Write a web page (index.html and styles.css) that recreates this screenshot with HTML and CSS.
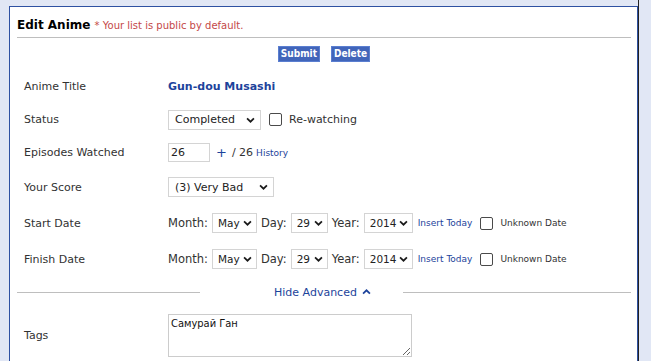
FILE: index.html
```html
<!DOCTYPE html>
<html lang="en">
<head>
    <meta charset="UTF-8">
    <meta name="viewport" content="width=device-width, initial-scale=1.0">
    <title>Edit Anime</title>
    <link rel="stylesheet" href="styles.css">
</head>
<body>
<div class="page">
    <div class="edit-box">
        <h2 class="edit-header">Edit Anime <span class="notice">* Your list is public by default.</span></h2>

        <div class="button-container">
            <button type="submit" class="btn">Submit</button>
            <button type="button" class="btn">Delete</button>
        </div>

        <div class="form-row row-title">
            <div class="label">Anime Title</div>
            <div class="value"><strong class="anime-title">Gun-dou Musashi</strong></div>
        </div>

        <div class="form-row">
            <div class="label">Status</div>
            <div class="value">
                <span class="select-wrap w-status">
                    <select><option>Completed</option></select>
                    <svg class="chev" viewBox="0 0 10 7"><path d="M1 1.5 L5 5.5 L9 1.5"/></svg>
                </span>
                <input type="checkbox" class="check" id="rewatch">
                <label for="rewatch" class="check-label">Re-watching</label>
            </div>
        </div>

        <div class="form-row">
            <div class="label">Episodes Watched</div>
            <div class="value">
                <input type="text" class="episodes" value="26">
                <a href="#" class="plus">+</a>
                <span class="total">/ 26</span>
                <a href="#" class="small-link">History</a>
            </div>
        </div>

        <div class="form-row row-wide">
            <div class="label">Your Score</div>
            <div class="value">
                <span class="select-wrap w-score">
                    <select><option>(3) Very Bad</option></select>
                    <svg class="chev" viewBox="0 0 10 7"><path d="M1 1.5 L5 5.5 L9 1.5"/></svg>
                </span>
            </div>
        </div>

        <div class="form-row row-wide">
            <div class="label">Start Date</div>
            <div class="value date">
                <span>Month:</span>
                <span class="select-wrap w-month">
                    <select><option>May</option></select>
                    <svg class="chev" viewBox="0 0 10 7"><path d="M1 1.5 L5 5.5 L9 1.5"/></svg>
                </span>
                <span>Day:</span>
                <span class="select-wrap w-day">
                    <select><option>29</option></select>
                    <svg class="chev" viewBox="0 0 10 7"><path d="M1 1.5 L5 5.5 L9 1.5"/></svg>
                </span>
                <span>Year:</span>
                <span class="select-wrap w-year">
                    <select><option>2014</option></select>
                    <svg class="chev" viewBox="0 0 10 7"><path d="M1 1.5 L5 5.5 L9 1.5"/></svg>
                </span>
                <a href="#" class="small-link">Insert Today</a>
                <input type="checkbox" class="check">
                <span class="small-text">Unknown Date</span>
            </div>
        </div>

        <div class="form-row row-wide">
            <div class="label">Finish Date</div>
            <div class="value date">
                <span>Month:</span>
                <span class="select-wrap w-month">
                    <select><option>May</option></select>
                    <svg class="chev" viewBox="0 0 10 7"><path d="M1 1.5 L5 5.5 L9 1.5"/></svg>
                </span>
                <span>Day:</span>
                <span class="select-wrap w-day">
                    <select><option>29</option></select>
                    <svg class="chev" viewBox="0 0 10 7"><path d="M1 1.5 L5 5.5 L9 1.5"/></svg>
                </span>
                <span>Year:</span>
                <span class="select-wrap w-year">
                    <select><option>2014</option></select>
                    <svg class="chev" viewBox="0 0 10 7"><path d="M1 1.5 L5 5.5 L9 1.5"/></svg>
                </span>
                <a href="#" class="small-link">Insert Today</a>
                <input type="checkbox" class="check">
                <span class="small-text">Unknown Date</span>
            </div>
        </div>

        <!-- Advanced toggle -->
        <div class="advanced">
            <span class="adv-line left"></span>
            <a href="#" class="adv-link">Hide Advanced
                <svg class="chev-up" viewBox="0 0 10 7"><path d="M1 5.5 L5 1.5 L9 5.5"/></svg>
            </a>
            <span class="adv-line"></span>
        </div>

        <div class="form-row row-tags">
            <div class="label">Tags</div>
            <div class="value">
                <textarea class="tags">Самурай Ган</textarea>
            </div>
        </div>
    </div>
</div>
</body>
</html>
```

FILE: styles.css
```css
body {
    margin: 0;
    background-color: #e1e7f5;
    font-family: Verdana, "DejaVu Sans", sans-serif;
    font-size: 11px;
    color: #323232;
    overflow: hidden;
}

.page {
    width: 639px;
    height: 361px;
    padding: 6px 0 0 9px;
    border-right: 1px solid #222;
    box-sizing: border-box;
}

.edit-box {
    background: #fff;
    border: 1px solid #2e51a2;
    border-bottom: none;
    height: 400px;
    padding: 0 6px 0 7px;
}

.edit-header {
    margin: 0;
    padding: 10px 0 3px;
    font-size: 12px;
    font-weight: bold;
    color: #000;
    border-bottom: 1px solid #bebebe;
    line-height: 16px;
}

.notice {
    font-size: 10px;
    font-weight: normal;
    color: #c44848;
}

.button-container {
    display: flex;
    justify-content: center;
    gap: 11px;
    margin-top: 8px;
}

.btn {
    background-color: #4165ba;
    color: #fff;
    border: 1px solid #5a7ed0;
    font-family: Tahoma, "DejaVu Sans Condensed", sans-serif;
    font-size: 10px;
    font-weight: bold;
    padding: 0 2px;
    height: 16px;
    line-height: 14px;
    border-radius: 0;
    cursor: pointer;
}

.form-row {
    display: flex;
    align-items: center;
    min-height: 33px;
    padding-left: 7px;
}

.row-title {
    margin-top: 8px;
}

.row-wide {
    min-height: 36px;
}

.label {
    width: 144px;
    flex-shrink: 0;
}

.value {
    display: flex;
    align-items: center;
}

.anime-title {
    color: #1d439b;
    font-size: 11px;
}

.select-wrap {
    position: relative;
    display: inline-block;
}

.select-wrap select {
    appearance: none;
    -webkit-appearance: none;
    display: block;
    width: 100%;
    height: 20px;
    border: 1px solid #d4d4d4;
    border-radius: 0;
    background: #fff;
    font-family: inherit;
    font-size: 11px;
    color: #222;
    padding: 0 0 0 6px;
    outline: none;
}

.date .select-wrap select {
    font-size: 10.5px;
    padding-left: 5px;
}

.chev {
    position: absolute;
    right: 6px;
    top: 7px;
    width: 9px;
    height: 6px;
    pointer-events: none;
}

.date .chev {
    right: 5px;
}

.chev path,
.chev-up path {
    fill: none;
    stroke: #1a1a1a;
    stroke-width: 2;
}

.w-status { width: 93px; }
.w-score { width: 106px; }
.w-month { width: 45px; }
.w-day { width: 37px; }
.w-year { width: 49px; }

.check {
    appearance: none;
    -webkit-appearance: none;
    width: 13px;
    height: 13px;
    border: 1px solid #4a4a4a;
    border-radius: 2px;
    margin: 0 7px 0 8px;
    background: #fff;
}

.check-label {
    font-size: 11px;
}

.episodes {
    width: 42px;
    height: 19px;
    box-sizing: border-box;
    border: 1px solid #d4d4d4;
    font-family: inherit;
    font-size: 11px;
    padding: 0 2px;
    margin: 0;
    color: #222;
}

.plus {
    color: #1d439b;
    text-decoration: none;
    font-size: 13px;
    margin: 0 5px 0 6px;
}

.total {
    font-size: 11px;
    margin-right: 3px;
}

.small-link {
    color: #1d439b;
    text-decoration: none;
    font-size: 9px;
}

.small-text {
    font-size: 9px;
}

.date {
    gap: 4px;
    font-size: 11.5px;
}

.date .small-link {
    margin-left: 1px;
}

.date .check {
    margin: 0 3px 0 4px;
}

.advanced {
    display: flex;
    align-items: center;
    height: 30px;
}

.adv-line {
    flex: 1;
    height: 1px;
    background: #bebebe;
}

.adv-line.left {
    flex: none;
    width: 183px;
}

.adv-link {
    color: #1d439b;
    text-decoration: none;
    font-size: 11px;
    padding: 0 32px 0 74px;
    display: flex;
    align-items: center;
    gap: 5px;
}

.chev-up {
    width: 9px;
    height: 6px;
}

.chev-up path {
    stroke: #1d439b;
}

.row-tags {
    padding-top: 7px;
}

.tags {
    width: 244px;
    height: 43px;
    box-sizing: border-box;
    border: 1px solid #ccc;
    font-family: Tahoma, "DejaVu Sans Condensed", sans-serif;
    font-size: 11px;
    padding: 2px;
    resize: vertical;
    color: #111;
}
```
